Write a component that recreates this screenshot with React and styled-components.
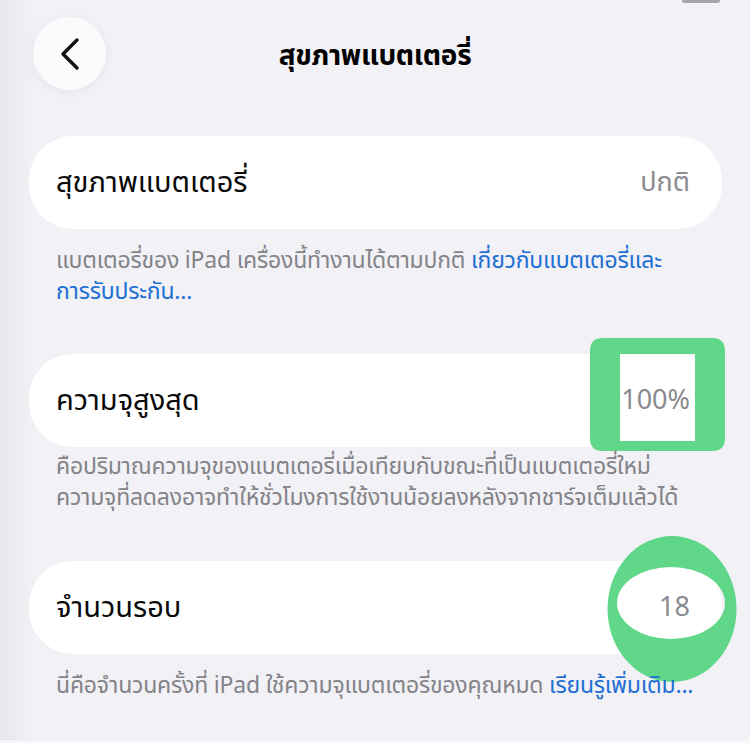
import React from "react";
import styled, { createGlobalStyle } from "styled-components";

const Global = createGlobalStyle`
  html, body { margin: 0; padding: 0; }
  body {
    background: #f1f1f6;
    font-family: "Noto Sans Thai", "Noto Sans", "Liberation Sans", sans-serif;
  }
`;

const Page = styled.div`
  position: relative;
  width: 750px;
  height: 743px;
  overflow: hidden;
  box-sizing: border-box;
  background: linear-gradient(to right, #e6e6eb 0px, #f1f1f6 36px);
  border-bottom: 3px solid #f6f6f9;
`;

const StatusNub = styled.div`
  position: absolute;
  top: -2px;
  right: 30px;
  width: 38px;
  height: 5px;
  border-radius: 3px;
  background: #a5a5aa;
`;

const Header = styled.header`
  display: grid;
  grid-template-columns: 73px 1fr 73px;
  align-items: center;
  padding: 17px 33px 0 33px;
  height: 73px;
`;

const BackButton = styled.button`
  width: 73px;
  height: 73px;
  border-radius: 50%;
  border: none;
  background: #fbfbfd;
  box-shadow: 0 2px 14px rgba(0, 0, 0, 0.05);
  display: flex;
  align-items: center;
  justify-content: center;
  padding: 0;
`;

const Title = styled.h1`
  margin: 0;
  padding-top: 5px;
  text-align: center;
  font-size: 28px;
  font-weight: 700;
  color: #000;
  letter-spacing: -0.3px;
`;

const Content = styled.main`
  display: flex;
  flex-direction: column;
  padding: 46px 28px 0 29px;
`;

const Section = styled.section`
  display: flex;
  flex-direction: column;
  margin-bottom: ${(p) => p.$gap}px;
`;

const Card = styled.div`
  position: relative;
  height: 93px;
  background: #ffffff;
  border-radius: 44px;
  display: flex;
  align-items: center;
  justify-content: space-between;
  padding: 0 32px 0 27px;
`;

const Label = styled.span`
  font-size: 29px;
  color: #0a0a0a;
`;

const Value = styled.span`
  position: relative;
  z-index: 2;
  font-size: 27px;
  color: #8a8a8f;
`;

const Footer = styled.p`
  position: relative;
  z-index: 2;
  margin: ${(p) => p.$top}px 0 0 27px;
  font-size: 23px;
  line-height: 31px;
  color: #838388;
  letter-spacing: -0.2px;
`;

const Link = styled.a`
  color: #1f6fd3;
  text-decoration: none;
`;

const Mark = styled.svg`
  position: absolute;
  z-index: 1;
  left: ${(p) => p.$left}px;
  top: ${(p) => p.$top}px;
  overflow: visible;
  pointer-events: none;
`;

export default function App() {
  return (
    <>
      <Global />
      <Page>
        <StatusNub />
        <Header>
          <BackButton aria-label="back">
            <svg width="24" height="36" viewBox="0 0 24 36">
              <path
                d="M19 4 L5 18 L19 32"
                fill="none"
                stroke="#111"
                strokeWidth="3.4"
                strokeLinecap="round"
                strokeLinejoin="round"
              />
            </svg>
          </BackButton>
          <Title>สุขภาพแบตเตอรี่</Title>
          <span />
        </Header>

        <Content>
          <Section $gap={46}>
            <Card>
              <Label>สุขภาพแบตเตอรี่</Label>
              <Value>ปกติ</Value>
            </Card>
            <Footer $top={17}>
              แบตเตอรี่ของ iPad เครื่องนี้ทำงานได้ตามปกติ{" "}
              <Link>
                เกี่ยวกับแบตเตอรี่และ
                <br />
                การรับประกัน...
              </Link>
            </Footer>
          </Section>

          <Section $gap={47}>
            <Card>
              <Label>ความจุสูงสุด</Label>
              <Value>100%</Value>
              <Mark $left={561} $top={-16} width="135" height="113" viewBox="0 0 135 113">
                <path
                  fillRule="evenodd"
                  fill="#4fd37c"
                  fillOpacity="0.9"
                  d="M13 0 H122 Q135 0 135 13 V100 Q135 113 122 113 H13 Q0 113 0 100 V13 Q0 0 13 0 Z M30 16 V103 H105 V16 Z"
                />
              </Mark>
            </Card>
            <Footer $top={5}>
              คือปริมาณความจุของแบตเตอรี่เมื่อเทียบกับขณะที่เป็นแบตเตอรี่ใหม่
              <br />
              ความจุที่ลดลงอาจทำให้ชั่วโมงการใช้งานน้อยลงหลังจากชาร์จเต็มแล้วได้
            </Footer>
          </Section>

          <Section $gap={0}>
            <Card>
              <Label>จำนวนรอบ</Label>
              <Value>18</Value>
              <Mark $left={578} $top={-25} width="130" height="148" viewBox="0 0 130 148">
                <path
                  fillRule="evenodd"
                  fill="#4fd37c"
                  fillOpacity="0.9"
                  d="M0.5 73 a64.5 73 0 1 0 129 0 a64.5 73 0 1 0 -129 0 Z M10 67 a54 36 0 1 0 108 0 a54 36 0 1 0 -108 0 Z"
                />
              </Mark>
            </Card>
            <Footer $top={17}>
              นี่คือจำนวนครั้งที่ iPad ใช้ความจุแบตเตอรี่ของคุณหมด{" "}
              <Link>เรียนรู้เพิ่มเติม...</Link>
            </Footer>
          </Section>
        </Content>
      </Page>
    </>
  );
}
